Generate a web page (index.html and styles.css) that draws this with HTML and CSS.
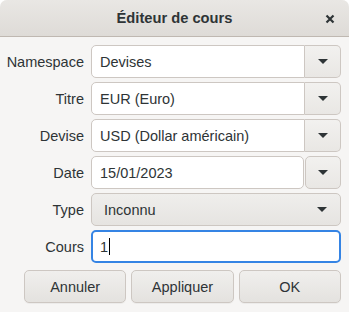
FILE: index.html
```html
<!DOCTYPE html>
<html lang="fr">
<head>
  <meta charset="UTF-8">
  <title>Éditeur de cours</title>
  <link rel="stylesheet" href="styles.css">
</head>
<body>
  <div class="window">
    <div class="titlebar">
      <span class="title">Éditeur de cours</span>
      <span class="close">
        <svg width="10" height="10" viewBox="0 0 10 10"><path d="M1.5 1.5 L8.5 8.5 M8.5 1.5 L1.5 8.5" stroke="#2e3436" stroke-width="2.2" stroke-linecap="butt"/></svg>
      </span>
    </div>

    <div class="form">
      <label class="label">Namespace</label>
      <div class="combo">
        <div class="entry joined">Devises</div>
        <div class="arrow-btn joined"><span class="arrow"></span></div>
      </div>

      <label class="label">Titre</label>
      <div class="combo">
        <div class="entry joined">EUR (Euro)</div>
        <div class="arrow-btn joined"><span class="arrow"></span></div>
      </div>

      <label class="label">Devise</label>
      <div class="combo">
        <div class="entry joined">USD (Dollar américain)</div>
        <div class="arrow-btn joined"><span class="arrow"></span></div>
      </div>

      <label class="label">Date</label>
      <div class="combo split">
        <div class="entry">15/01/2023</div>
        <div class="arrow-btn"><span class="arrow"></span></div>
      </div>

      <label class="label">Type</label>
      <div class="select">
        <span>Inconnu</span>
        <span class="arrow"></span>
      </div>

      <label class="label">Cours</label>
      <div class="entry focused">1<span class="caret"></span></div>
    </div>

    <div class="actions">
      <button class="button">Annuler</button>
      <button class="button">Appliquer</button>
      <button class="button">OK</button>
    </div>
  </div>
</body>
</html>
```

FILE: styles.css
```css
:root {
  --fg: #2e3436;
  --border: #cdc7c2;
  --bg: #f6f5f4;
  --focus: #3584e4;
}
body {
  margin: 0;
  background: #ffffff;
  font-family: 'Liberation Sans', Arial, sans-serif;
  font-size: 14.5px;
  color: var(--fg);
}
.window {
  width: 349px;
  height: 312px;
  background: var(--bg);
  border-radius: 7px 7px 0 0;
  overflow: hidden;
  box-sizing: border-box;
}
.titlebar {
  height: 36px;
  border-bottom: 1px solid #bfb8b1;
  background: linear-gradient(#e9e7e4, #dedbd7);
  display: flex;
  align-items: center;
  justify-content: center;
  position: relative;
}
.title {
  font-weight: bold;
  font-size: 14.7px;
}
.close {
  position: absolute;
  right: 14px;
  top: 14px;
  width: 10px;
  height: 10px;
  display: flex;
}
.form {
  display: grid;
  grid-template-columns: 77px 1fr;
  column-gap: 7px;
  row-gap: 4px;
  grid-auto-rows: 33px;
  padding: 8px 8px 0 7px;
}
.label {
  display: flex;
  align-items: center;
  justify-content: flex-end;
}
.combo {
  display: flex;
}
.split {
  gap: 1px;
}
.entry {
  flex: 1;
  display: flex;
  align-items: center;
  padding: 0 8px;
  background: #ffffff;
  border: 1px solid var(--border);
  border-radius: 5px;
  box-sizing: border-box;
}
.entry.joined {
  border-radius: 5px 0 0 5px;
}
.arrow-btn {
  width: 36px;
  display: flex;
  align-items: center;
  justify-content: center;
  background: linear-gradient(#f2f1ef, #e9e7e4);
  border: 1px solid var(--border);
  border-radius: 5px;
  box-sizing: border-box;
}
.arrow-btn.joined {
  border-left: none;
  border-radius: 0 5px 5px 0;
}
.arrow {
  width: 0;
  height: 0;
  border-left: 5px solid transparent;
  border-right: 5px solid transparent;
  border-top: 5px solid var(--fg);
}
.select {
  display: flex;
  align-items: center;
  justify-content: space-between;
  padding: 0 13px 0 12px;
  background: linear-gradient(#efeeec, #e6e4e1);
  border: 1px solid var(--border);
  border-radius: 5px;
  box-sizing: border-box;
}
.entry.focused {
  border: 2px solid var(--focus);
  padding-left: 7px;
}
.caret {
  width: 1px;
  height: 17px;
  background: #000000;
  margin-left: 1px;
}
.actions {
  display: grid;
  grid-template-columns: 1fr 1fr 1fr;
  gap: 5px;
  padding: 7px 8px 0 24px;
}
.button {
  height: 33px;
  font-family: inherit;
  font-size: 14.5px;
  color: var(--fg);
  background: linear-gradient(#f0efed, #e4e2df);
  border: 1px solid var(--border);
  border-radius: 5px;
  box-shadow: 0 1px 0 rgba(0, 0, 0, 0.04);
  padding: 0;
}
```
